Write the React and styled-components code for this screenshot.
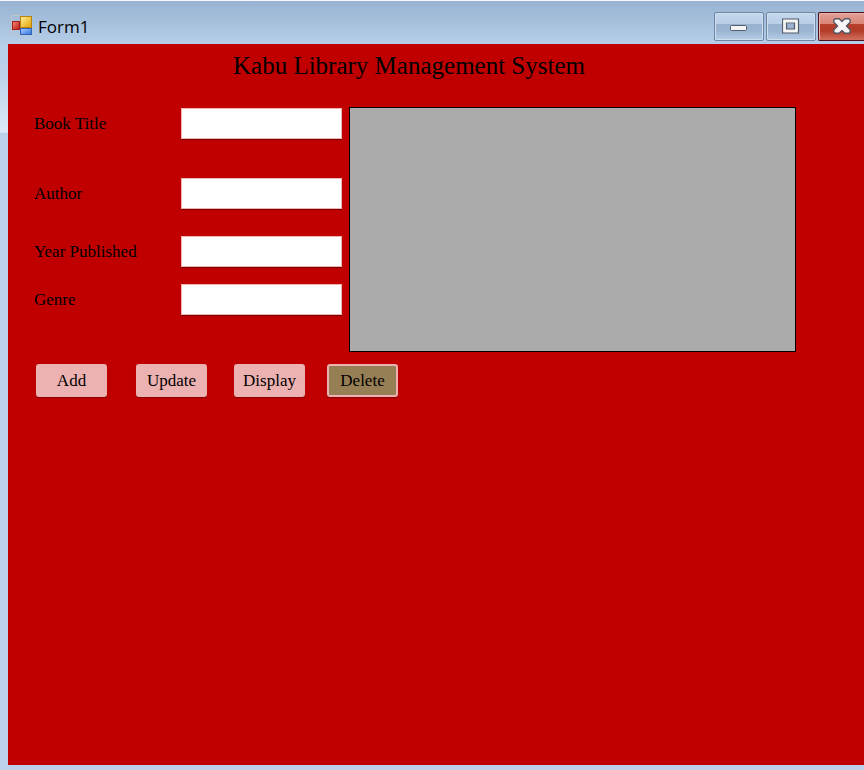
import React from "react";
import styled, { createGlobalStyle, css } from "styled-components";

const GlobalStyle = createGlobalStyle`
  *, *::before, *::after { box-sizing: border-box; }
  body { margin: 0; font-family: "Liberation Serif", serif; color: #000; }
`;

const Window = styled.div`
  display: flex;
  flex-direction: column;
  min-height: 100vh;
  overflow: hidden;
  background: #bad1e9;
`;

const TitleBar = styled.header`
  display: flex;
  align-items: center;
  height: 44px;
  padding-left: 11px;
  border-top: 1px solid #f4f8fc;
  background: linear-gradient(#98b4d2, #a6c0dc 50%, #b6cee8);
`;

const AppIcon = styled.svg`
  flex: none;
  width: 22px;
  height: 21px;
  margin-top: 5px;
`;

const Caption = styled.span`
  flex: 1;
  padding: 9px 0 0 5px;
  font: 17px/24px "Open Sans", sans-serif;
`;

const WindowButtons = styled.div`
  display: flex;
  gap: 2px;
  padding-top: 7px;
`;

const closeLook = css`
  width: 46px;
  border-color: #4a1020;
  border-right: 0;
  border-radius: 2px 0 0 2px;
  background: linear-gradient(#e0a096, #d98577 40%, #b8402c 41%, #b23c28 65%, #d0705c);
  box-shadow: inset 1px 1px 0 #eab4aa;
`;

const WindowButton = styled.button`
  display: flex;
  align-items: center;
  justify-content: center;
  width: 50px;
  height: 29px;
  padding: 0;
  border: 1px solid #6c86a4;
  border-radius: 2px;
  background: linear-gradient(#c3d7ec, #b9cfe7 40%, #97b1ce 41%, #9ab4d1 65%, #b5cce5);
  box-shadow: inset 0 0 0 1px #cfdff0;
  ${(p) => p.$close && closeLook}
`;

const Client = styled.main`
  flex: 1;
  margin: 0 0 5px 8px;
  padding: 4px 68px 24px 26px;
  background: #c00000;
`;

const Frame = styled.div`
  flex: 1;
  display: flex;
  background: linear-gradient(#b7cfe8, #bcd2e9 30px, #dce9f6 88px, #b3cbe4 90px, #bad1e9 91px);
`;

const Heading = styled.h1`
  margin: 0 0 23px;
  padding-left: 199px;
  font-size: 25px;
  line-height: 36px;
  font-weight: 400;
  white-space: nowrap;
`;

const Columns = styled.div`
  display: flex;
  gap: 7px;
`;

const Fields = styled.form`
  flex: none;
  width: 308px;
  padding-top: 1px;
`;

const Field = styled.div`
  display: grid;
  grid-template-columns: 147px 1fr;
  align-items: center;
  margin-bottom: ${(p) => p.$gap}px;
`;

const Label = styled.label`
  font-size: 17px;
  line-height: 20px;
`;

const TextBox = styled.input`
  width: 100%;
  height: 31px;
  padding: 4px 6px;
  border: 1px solid #eeb4b4;
  border-radius: 0;
  background: #fff;
  box-shadow: 0 1px 0 #7c0000;
  font: 17px/20px "Liberation Serif", serif;
  outline: none;
`;

const DataGrid = styled.section`
  flex: 1;
  min-width: 0;
  min-height: 245px;
  border: 1px solid #000;
  background: #ababab;
`;

const Actions = styled.div`
  display: flex;
  padding: 12px 0 0 2px;
`;

const ActionButton = styled.button`
  width: 71px;
  height: 33px;
  margin-right: ${(p) => p.$gap}px;
  padding: 0;
  border: 2px solid #ecb1b1;
  border-radius: 3px;
  background: ${(p) => (p.$selected ? "#967e55" : "#ecb1b1")};
  box-shadow: 0 1px 1px #850000;
  color: #000;
  font: 17px/20px "Liberation Serif", serif;
`;

const FIELDS = [
  { id: "title", label: "Book Title", gap: 39 },
  { id: "author", label: "Author", gap: 27 },
  { id: "year", label: "Year Published", gap: 17 },
  { id: "genre", label: "Genre", gap: 0 },
];

const ACTIONS = [
  { label: "Add", gap: 29 },
  { label: "Update", gap: 27 },
  { label: "Display", gap: 22 },
  { label: "Delete", gap: 0, selected: true },
];

function FormIcon() {
  return (
    <AppIcon viewBox="0 0 22 21" aria-hidden="true">
      <defs>
        <linearGradient id="gold" x2="1" y2="1">
          <stop stopColor="#fff09a" />
          <stop offset="1" stopColor="#e2a000" />
        </linearGradient>
        <linearGradient id="red" x2="1" y2="1">
          <stop stopColor="#f58a78" />
          <stop offset="1" stopColor="#bd1710" />
        </linearGradient>
        <linearGradient id="blue" x2="1" y2="1">
          <stop stopColor="#a9d0ff" />
          <stop offset="1" stopColor="#2f6ede" />
        </linearGradient>
      </defs>
      <path d="M9 .5H.5v19.5H9" fill="none" stroke="#bfc5cd" />
      <rect x="9.5" y="1.5" width="11" height="11" fill="url(#gold)" stroke="#b9820c" />
      <rect x="1.5" y="6.5" width="7" height="8" fill="url(#red)" stroke="#a3201a" />
      <rect x="9.5" y="13.5" width="11" height="6" fill="url(#blue)" stroke="#3562b5" />
    </AppIcon>
  );
}

function MinimizeGlyph() {
  return (
    <svg width="18" height="18" viewBox="0 0 18 18" aria-hidden="true">
      <rect x=".5" y="8.5" width="16" height="5" rx="1" fill="#f4f4f4" stroke="#555d6d" />
    </svg>
  );
}

function MaximizeGlyph() {
  return (
    <svg width="18" height="16" viewBox="0 0 18 16" aria-hidden="true">
      <path
        d="M.5 1h16v14H.5zM4.5 5v6h8V5z"
        fill="#f4f4f4"
        fillRule="evenodd"
        stroke="#555d6d"
        strokeWidth="1.2"
      />
    </svg>
  );
}

function CloseGlyph() {
  return (
    <svg width="18" height="16" viewBox="0 0 18 16" aria-hidden="true">
      <path
        d="M2 .8h4.2L9 3.4 11.8.8H16l1.2 1.4v2L13.4 8l3.8 3.8v2L16 15.2h-4.2L9 12.6l-2.8 2.6H2L.8 13.8v-2L4.6 8 .8 4.2v-2z"
        fill="#f6f6f6"
        stroke="#555563"
        strokeWidth="1.4"
        strokeLinejoin="round"
      />
    </svg>
  );
}

export default function App() {
  return (
    <>
      <GlobalStyle />
      <Window>
        <TitleBar>
          <FormIcon />
          <Caption>Form1</Caption>
          <WindowButtons>
            <WindowButton type="button" aria-label="Minimize">
              <MinimizeGlyph />
            </WindowButton>
            <WindowButton type="button" aria-label="Maximize">
              <MaximizeGlyph />
            </WindowButton>
            <WindowButton type="button" aria-label="Close" $close>
              <CloseGlyph />
            </WindowButton>
          </WindowButtons>
        </TitleBar>
        <Frame>
          <Client>
            <Heading>Kabu Library Management System</Heading>
            <Columns>
              <Fields id="book-form" onSubmit={(e) => e.preventDefault()}>
                {FIELDS.map((f) => (
                  <Field key={f.id} $gap={f.gap}>
                    <Label htmlFor={f.id}>{f.label}</Label>
                    <TextBox id={f.id} type="text" />
                  </Field>
                ))}
              </Fields>
              <DataGrid aria-label="Books" />
            </Columns>
            <Actions>
              {ACTIONS.map((a) => (
                <ActionButton key={a.label} type="button" $gap={a.gap} $selected={a.selected}>
                  {a.label}
                </ActionButton>
              ))}
            </Actions>
          </Client>
        </Frame>
      </Window>
    </>
  );
}
